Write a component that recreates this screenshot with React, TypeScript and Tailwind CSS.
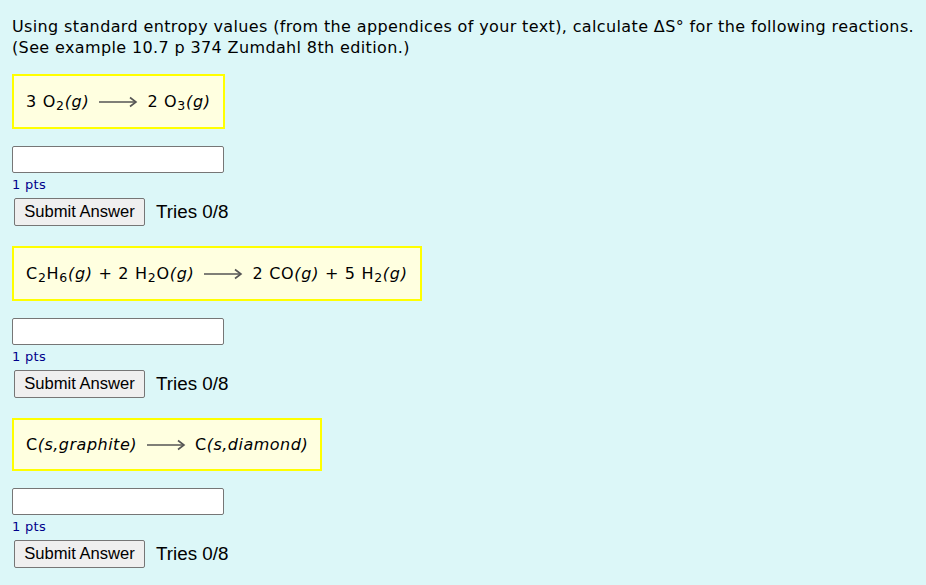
import React from "react";

const Arrow = () => (
  <svg width="40" height="14" viewBox="0 0 40 14" className="mx-[9px] inline-block align-middle">
    <line x1="1" y1="7" x2="37" y2="7" stroke="#555" strokeWidth="1.6" />
    <path d="M32 2.5 L38 7 L32 11.5" fill="none" stroke="#555" strokeWidth="1.6" />
  </svg>
);

const Sub = ({ children }: { children: React.ReactNode }) => (
  <sub className="text-[12.5px] relative top-[3px] align-baseline">{children}</sub>
);

const G = ({ s = "g" }: { s?: string }) => <span className="italic">({s})</span>;

const Box = ({
  children,
  track = "tracking-[0.7px]",
  h = "h-[55px]",
}: {
  children: React.ReactNode;
  track?: string;
  h?: string;
}) => (
  <div className={`inline-flex items-center border-2 border-[#ffff00] bg-[#ffffe0] px-[12px] whitespace-nowrap ${h} ${track}`}>
    {children}
  </div>
);

const Answer = () => (
  <div className="mt-[17px]">
    <div className="w-[212px] h-[27px] bg-white border border-[#767676] rounded-[2px]" />
    <div className="text-[13px] text-[#00008b] leading-[16px] mt-[4px] tracking-[0.3px]">1 pts</div>
    <div className="flex items-center mt-[5px] pl-[2px]" style={{ fontFamily: '"Liberation Sans", Arial, sans-serif' }}>
      <button className="h-[28px] w-[131px] bg-[#efefef] border border-[#767676] rounded-[2px] text-[16.6px] text-black">
        Submit Answer
      </button>
      <span className="ml-[11px] text-[18.8px] text-black">Tries 0/8</span>
    </div>
  </div>
);

export default function App() {
  return (
    <div
      className="w-[926px] h-[585px] bg-[#dcf7f8] pl-[12px] pt-[16px] text-black overflow-hidden"
      style={{ fontFamily: '"DejaVu Sans", Verdana, sans-serif' }}
    >
      <div className="text-[16px] leading-[21px] tracking-[0.37px] whitespace-nowrap">
        <div>Using standard entropy values (from the appendices of your text), calculate ΔS° for the following reactions.</div>
        <div>(See example 10.7 p 374 Zumdahl 8th edition.)</div>
      </div>

      <div className="mt-[16px] text-[16px] flex">
        <Box>
          <span>3 O<Sub>2</Sub><G /></span>
          <Arrow />
          <span>2 O<Sub>3</Sub><G /></span>
        </Box>
      </div>
      <Answer />

      <div className="mt-[20px] text-[16px] flex">
        <Box>
          <span>C<Sub>2</Sub>H<Sub>6</Sub><G /> + 2 H<Sub>2</Sub>O<G /></span>
          <Arrow />
          <span>2 CO<G /> + 5 H<Sub>2</Sub><G /></span>
        </Box>
      </div>
      <Answer />

      <div className="mt-[20px] text-[16px] flex">
        <Box track="tracking-[0.5px]" h="h-[53px]">
          <span>C<span className="italic">(s,graphite)</span></span>
          <Arrow />
          <span>C<span className="italic">(s,diamond)</span></span>
        </Box>
      </div>
      <Answer />
    </div>
  );
}
